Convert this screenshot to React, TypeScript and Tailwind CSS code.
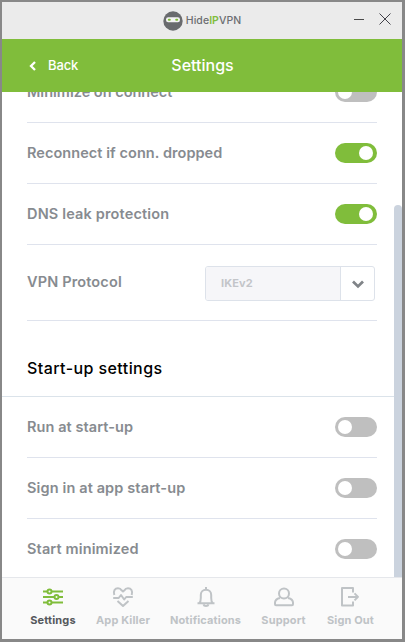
import type { ReactNode } from "react";
import clsx from "clsx";

function Toggle({ on }: { on?: boolean }) {
  return (
    <button
      role="switch"
      aria-checked={!!on}
      className={clsx("flex h-5 w-[42px] items-center rounded-full pr-1 pl-[3px]", on ? "justify-end bg-[#80bd3b]" : "bg-[#bfbfbf]")}
    >
      <span className="block size-3.5 rounded-full bg-white" />
    </button>
  );
}

function Row({ label, spacing, on }: { label: string; spacing: string; on?: boolean }) {
  return (
    <div className="mr-[17px] ml-[25px] flex h-[61px] shrink-0 items-center justify-between border-b border-[#dfe3ed]">
      <span className={clsx("text-[14.5px] font-semibold whitespace-nowrap text-[#878b90]", spacing)}>{label}</span>
      <Toggle on={on} />
    </div>
  );
}

function NavItem({ label, width, active, children }: { label: string; width: string; active?: boolean; children: ReactNode }) {
  return (
    <button className={clsx("flex flex-col items-center", width, active ? "text-[#80bd3b]" : "text-[#bfc3c6]")}>
      <svg width="22" height="22" viewBox="0 0 22 22" fill="none" stroke="currentColor" strokeWidth="2" strokeLinejoin="round">
        {children}
      </svg>
      <span className={clsx("mt-1 text-[11px] leading-4 font-bold tracking-[0.14px] whitespace-nowrap", active && "text-[#55585c]")}>
        {label}
      </span>
    </button>
  );
}

function Logo() {
  return (
    <div className="flex items-center gap-[3px]">
      <svg width="20" height="20" viewBox="0 0 20 20">
        <circle cx="10" cy="10" r="9.7" fill="#696b6e" />
        <rect x="3" y="6.3" width="14" height="5" rx="2.2" fill="#f4f4f4" />
        <rect x="4.8" y="7.8" width="3" height="2" rx="1" fill="#80bd3b" />
        <rect x="12.2" y="7.8" width="3" height="2" rx="1" fill="#80bd3b" />
      </svg>
      <span className="pt-px text-[10.5px] leading-4 font-medium tracking-[0.05px] text-[#6c6e71]">
        Hide<span className="font-semibold text-[#80bd3b]">IP</span>VPN
      </span>
    </div>
  );
}

export default function App() {
  return (
    <div className="flex h-[642px] w-[405px] flex-col overflow-hidden border-t-2 border-r-3 border-b-3 border-l-2 border-[#888888] bg-white font-[Inter,sans-serif]">
      <div className="grid h-[37px] shrink-0 grid-cols-[1fr_auto_1fr] items-center bg-[#ebebeb]">
        <span />
        <Logo />
        <div className="flex items-center justify-end gap-3.5 pr-[11px] pb-[3px]">
          <svg width="12" height="12" viewBox="0 0 12 12" stroke="#4a4a4a">
            <path d="M1 6.5h10" />
          </svg>
          <svg width="12" height="12" viewBox="0 0 12 12" stroke="#42424a">
            <path d="M.5.5l11 11M11.5.5l-11 11" />
          </svg>
        </div>
      </div>

      <header className="grid h-[53px] shrink-0 grid-cols-[1fr_auto_1fr] items-center bg-[#80bd3b] text-white">
        <button className="flex items-center gap-3 pl-[27px] text-[13px] font-medium tracking-[-0.1px]">
          <svg width="7" height="10" viewBox="0 0 7 10" fill="none" stroke="currentColor" strokeWidth="2.3">
            <path d="M6 1L2 5l4 4" />
          </svg>
          Back
        </button>
        <h1 className="pb-0.5 pl-px text-base font-medium">Settings</h1>
        <span />
      </header>

      <main className="flex min-h-0 flex-1 overflow-hidden">
        <div className="flex flex-1 flex-col overflow-hidden">
          <div className="-mt-[30px] flex flex-col">
            <Row label="Minimize on connect" spacing="tracking-normal" />
            <Row label="Reconnect if conn. dropped" spacing="tracking-[0.06px]" on />
            <Row label="DNS leak protection" spacing="tracking-[0.16px]" on />

            <div className="mr-[17px] ml-[25px] flex h-[76px] items-center justify-between border-b border-[#dfe3ed] pr-0.5">
              <span className="pb-0.5 text-[14.5px] font-semibold tracking-[0.15px] text-[#878b90]">VPN Protocol</span>
              <div className="mt-px flex h-[35px] w-[170px] overflow-hidden rounded-[3px] border border-[#dde2ea]">
                <span className="flex flex-1 items-center bg-[#f6f6f9] pl-[15px] text-[11px] font-bold tracking-[0.1px] text-[#c3c5c9]">IKEv2</span>
                <span className="flex w-[34px] items-center justify-center border-l border-[#dde2ea] pt-0.5">
                  <svg width="12" height="9" viewBox="0 0 12 9" fill="none" stroke="#808488" strokeWidth="2.8">
                    <path d="M1 1.6l5 4.8 5-4.8" />
                  </svg>
                </span>
              </div>
            </div>

            <h2 className="flex h-[76px] items-center border-b border-[#dbe3ea] pt-[18px] pl-[25px] text-base font-medium tracking-[0.42px] text-black">
              Start-up settings
            </h2>

            <Row label="Run at start-up" spacing="tracking-[0.08px]" />
            <Row label="Sign in at app start-up" spacing="tracking-[0.13px]" />
            <Row label="Start minimized" spacing="tracking-[0.13px]" />
          </div>
        </div>
        <div className="mt-[113px] w-2 rounded-t bg-[#cbd3de]" />
      </main>

      <nav className="flex h-[62px] shrink-0 gap-5 border-t border-[#e5e7eb] bg-[#fafafa] pt-2 pl-7">
        <NavItem label="Settings" width="w-[46px]" active>
          <path d="M1 5.500h4.500M9.500 5.500H21M1 11h11M17 11h4M1 16.500h4.500M9.500 16.500H21" />
          <circle cx="7.500" cy="5.500" r="2" />
          <circle cx="14.500" cy="11" r="2" />
          <circle cx="7.500" cy="16.500" r="2" />
        </NavItem>
        <NavItem label="App Killer" width="w-[54px]">
          <path d="M2.300 9C1 5 3 2.200 6 2.200c2 0 3 1 3.500 2L11 5.500l1.500-1.300c.5-1 1.500-2 3.500-2 3 0 5 2.800 3.700 6.800" />
          <path d="M1.200 12h5.500L9 9l3.200 4.500 2-2.500h6.600M5.500 15l5.500 5 5.500-5" />
        </NavItem>
        <NavItem label="Notifications" width="w-[71px]">
          <path d="M11 1v3M2.500 17.200h17M4.300 17c1.200-1 1.500-2.500 1.500-5V9c0-3 2.200-5.200 5.200-5.200S16.200 6 16.200 9v3c0 2.500.3 4 1.500 5M8.500 18.500c.5 2 4.500 2 5 0" />
        </NavItem>
        <NavItem label="Support" width="w-[45px]">
          <circle cx="11" cy="7.500" r="5" />
          <path d="M7 12c-3.300.8-5 2.300-5 4.600v1.700c0 .6.400 1 1 1h16c.6 0 1-.4 1-1v-1.700c0-2.300-1.700-3.800-5-4.600" />
        </NavItem>
        <NavItem label="Sign Out" width="w-[49px]">
          <path d="M13 6.500V2H2v17.500h11V15.500M8 10.900H18M14.500 7.400l3.500 3.500-3.500 3.500" />
        </NavItem>
      </nav>
    </div>
  );
}
